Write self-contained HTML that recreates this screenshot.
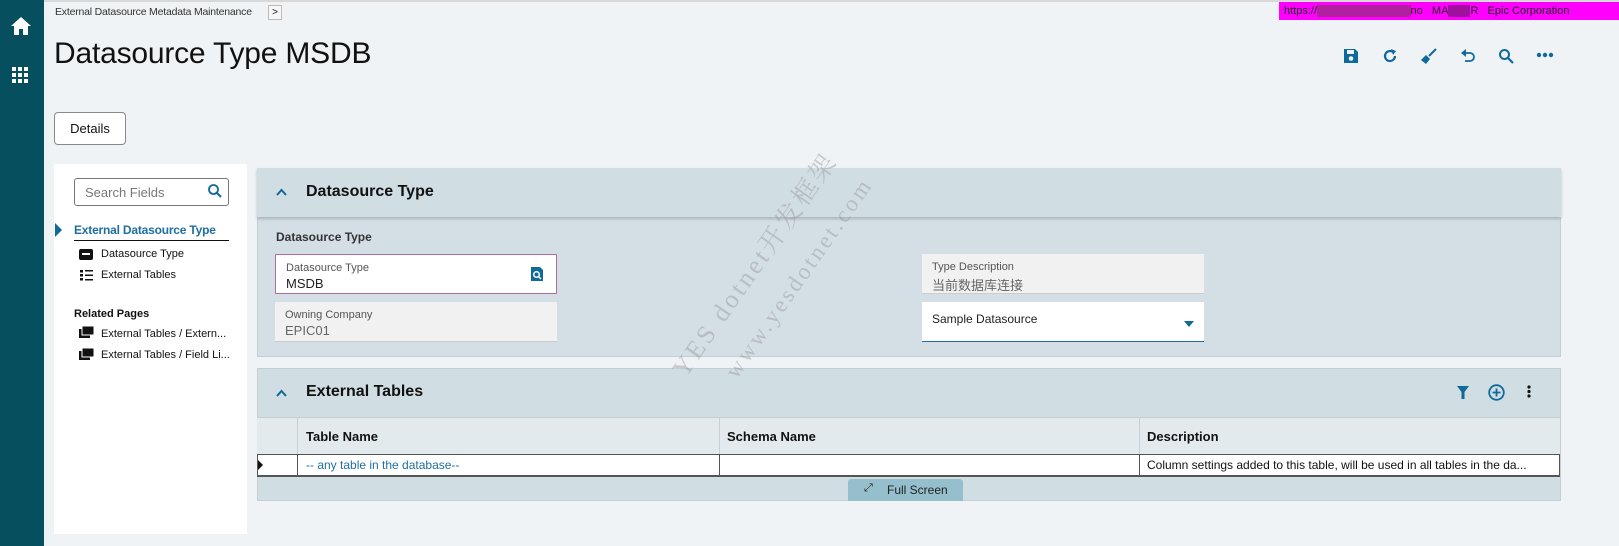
<!DOCTYPE html>
<html><head><meta charset="utf-8"><style>
*{box-sizing:border-box;margin:0;padding:0}
body{width:1619px;height:546px;overflow:hidden;background:#eff3f6;font-family:"Liberation Sans","Noto Sans CJK SC",sans-serif;position:relative;color:#111}
.abs{position:absolute}
.side{left:0;top:0;width:44px;height:546px;background:#064f5f}
.ic{fill:#0f6a9a}
.panel{background:#d3dfe5;border:1px solid #c4cfd5}
.fld{position:absolute;background:#f1f1f1;border-bottom:1px solid #ccc}
.fld .l{position:absolute;left:10px;top:7px;font-size:11px;color:#555}
.fld .v{position:absolute;left:10px;top:21px;font-size:13px;color:#222}
.th{position:absolute;font-size:13px;font-weight:bold;top:12px}
</style></head><body>
<div class="abs" style="left:0;top:0;width:1619px;height:2px;background:#d8d8d8"></div>
<div class="abs side">
<svg class="abs" style="left:10px;top:16px" width="22" height="20" viewBox="0 0 22 20"><path d="M11 1 L1 10 H4 V19 H9 V13 H13 V19 H18 V10 H21 Z" fill="#fff"/></svg>
<svg class="abs" style="left:12px;top:67px" width="18" height="16" viewBox="0 0 18 16"><g fill="#fff"><rect x="0" y="0" width="4" height="4"/><rect x="6" y="0" width="4" height="4"/><rect x="12" y="0" width="4" height="4"/><rect x="0" y="6" width="4" height="4"/><rect x="6" y="6" width="4" height="4"/><rect x="12" y="6" width="4" height="4"/><rect x="0" y="12" width="4" height="4"/><rect x="6" y="12" width="4" height="4"/><rect x="12" y="12" width="4" height="4"/></g></svg>
</div>
<div class="abs" style="left:55px;top:6px;font-size:10.5px;letter-spacing:-0.2px;color:#333">External Datasource Metadata Maintenance</div>
<div class="abs" style="left:268px;top:5px;width:14px;height:15px;border:1px solid #bbb;background:#f7f7f7;font-size:10px;text-align:center;line-height:13px">&gt;</div>
<div class="abs" style="left:1279px;top:2px;width:340px;height:18px;background:#ff00ff;font-size:11px;line-height:18px;padding-left:5px;color:#222">https://<span style="background:#b0209f;color:transparent">xxxxxxxxxxxxxxxxx</span>no &nbsp; MA<span style="background:#a0109f;color:transparent">xxxx</span>R &nbsp; Epic Corporation</div>
<div class="abs" style="left:54px;top:37px;font-size:30px;letter-spacing:-0.2px;color:#111">Datasource Type MSDB</div>
<!-- toolbar -->
<svg class="abs" style="left:1343px;top:48px" width="16" height="16" viewBox="0 0 16 16"><path class="ic" d="M1 1H12L15 4V15H1Z"/><rect x="4" y="2" width="7" height="4" fill="#eff3f6"/><circle cx="8" cy="10.5" r="2.3" fill="#eff3f6"/></svg>
<svg class="abs" style="left:1382px;top:48px" width="16" height="16" viewBox="0 0 16 16"><path d="M13 8A5 5 0 1 1 10.5 3.7" stroke="#0f6a9a" stroke-width="2.2" fill="none"/><path class="ic" d="M9 1L14 3L11 7Z"/></svg>
<svg class="abs" style="left:1420px;top:47px" width="18" height="18" viewBox="0 0 18 18"><path class="ic" d="M6 8L10 12L6 17L1 13Z"/><path d="M9 9L16 2" stroke="#0f6a9a" stroke-width="2"/></svg>
<svg class="abs" style="left:1460px;top:48px" width="16" height="16" viewBox="0 0 16 16"><path d="M4 5H10A4 4 0 0 1 10 13H5" stroke="#0f6a9a" stroke-width="1.8" fill="none"/><path class="ic" d="M1 5L6 1V9Z"/></svg>
<svg class="abs" style="left:1498px;top:48px" width="16" height="16" viewBox="0 0 16 16"><circle cx="6.5" cy="6.5" r="4.5" stroke="#0f6a9a" stroke-width="2" fill="none"/><path d="M10 10L15 15" stroke="#0f6a9a" stroke-width="2.2"/></svg>
<svg class="abs" style="left:1536px;top:52px" width="18" height="6"><circle cx="3" cy="3" r="2.2" fill="#0f6a9a"/><circle cx="9" cy="3" r="2.2" fill="#0f6a9a"/><circle cx="15" cy="3" r="2.2" fill="#0f6a9a"/></svg>
<div class="abs" style="left:54px;top:112px;width:72px;height:33px;border:1px solid #888;border-radius:4px;background:#fff;font-size:13px;text-align:center;line-height:31px">Details</div>
<!-- left nav -->
<div class="abs" style="left:54px;top:164px;width:193px;height:370px;background:#fff"></div>
<div class="abs" style="left:74px;top:178px;width:155px;height:28px;border:1px solid #777;border-radius:3px;font-size:13px;color:#777;padding:6px 10px">Search Fields</div>
<svg class="abs" style="left:207px;top:183px" width="16" height="16" viewBox="0 0 16 16"><circle cx="6.5" cy="6.5" r="4.5" stroke="#0f6a9a" stroke-width="1.8" fill="none"/><path d="M10 10L14 14" stroke="#0f6a9a" stroke-width="2"/></svg>
<svg class="abs" style="left:55px;top:223px" width="8" height="14"><path d="M0 0L7 7L0 14Z" fill="#0f6a9a"/></svg>
<div class="abs" style="left:74px;top:223px;font-size:12px;letter-spacing:-0.2px;font-weight:bold;color:#1e6fa0">External Datasource Type</div>
<div class="abs" style="left:74px;top:240px;width:155px;height:1px;background:#111"></div>
<svg class="abs" style="left:79px;top:249px" width="14" height="11"><rect width="14" height="11" rx="2" fill="#111"/><rect x="3" y="4" width="8" height="2" fill="#fff"/></svg>
<div class="abs" style="left:101px;top:248px;font-size:11px">Datasource Type</div>
<svg class="abs" style="left:80px;top:270px" width="13" height="11"><g fill="#111"><rect y="0" width="3" height="2.5"/><rect y="4" width="3" height="2.5"/><rect y="8" width="3" height="2.5"/><rect x="5" y="0" width="8" height="1.5"/><rect x="5" y="4.5" width="8" height="1.5"/><rect x="5" y="9" width="8" height="1.5"/></g></svg>
<div class="abs" style="left:101px;top:269px;font-size:11px">External Tables</div>
<div class="abs" style="left:74px;top:308px;font-size:11px;font-weight:bold">Related Pages</div>
<svg class="abs" style="left:79px;top:326px" width="15" height="12"><rect x="0" y="3" width="11" height="9" fill="#111"/><rect x="3" y="0" width="12" height="9" fill="#111" stroke="#fff" stroke-width="1"/></svg>
<div class="abs" style="left:101px;top:328px;font-size:11px">External Tables / Extern...</div>
<svg class="abs" style="left:79px;top:348px" width="15" height="12"><rect x="0" y="3" width="11" height="9" fill="#111"/><rect x="3" y="0" width="12" height="9" fill="#111" stroke="#fff" stroke-width="1"/></svg>
<div class="abs" style="left:101px;top:349px;font-size:11px">External Tables / Field Li...</div>
<!-- panel 1 -->
<div class="abs panel" style="left:257px;top:168px;width:1304px;height:189px"></div>
<div class="abs" style="left:257px;top:168px;width:1304px;height:49px;background:#d0dde3;box-shadow:0 2px 3px rgba(0,0,0,.2)"></div>
<svg class="abs" style="left:276px;top:188px" width="11" height="8"><path d="M1 7L5.5 2L10 7" stroke="#0f6a9a" stroke-width="2" fill="none"/></svg>
<div class="abs" style="left:306px;top:183px;font-size:16px;font-weight:bold">Datasource Type</div>
<div class="abs" style="left:276px;top:230px;font-size:12px;font-weight:bold;color:#333">Datasource Type</div>
<div class="fld" style="left:275px;top:254px;width:282px;height:40px;background:#fff;border:1px solid #b0709a"><span class="l">Datasource Type</span><span class="v">MSDB</span></div>
<svg class="abs" style="left:531px;top:267px" width="12" height="14"><path d="M0 0H9L12 3V14H0Z" fill="#0f6a9a"/><circle cx="5.5" cy="7.5" r="2.8" stroke="#fff" stroke-width="1.5" fill="none"/><path d="M7.5 9.5L10 12" stroke="#fff" stroke-width="1.5"/></svg>
<div class="fld" style="left:275px;top:302px;width:282px;height:40px"><span class="l">Owning Company</span><span class="v" style="color:#666">EPIC01</span></div>
<div class="fld" style="left:922px;top:254px;width:282px;height:40px"><span class="l">Type Description</span><span class="v" style="color:#666">当前数据库连接</span></div>
<div class="fld" style="left:922px;top:302px;width:282px;height:40px;background:#fff;border-bottom:1px solid #1e6fa0"><span class="v" style="top:10px;font-size:12px">Sample Datasource</span></div>
<svg class="abs" style="left:1184px;top:321px" width="10" height="6"><path d="M0 0H10L5 6Z" fill="#0f6a9a"/></svg>
<!-- panel 2 -->
<div class="abs panel" style="left:257px;top:368px;width:1304px;height:133px;background:#d0dde3"></div>
<svg class="abs" style="left:276px;top:389px" width="11" height="8"><path d="M1 7L5.5 2L10 7" stroke="#0f6a9a" stroke-width="2" fill="none"/></svg>
<div class="abs" style="left:306px;top:383px;font-size:16px;font-weight:bold">External Tables</div>
<svg class="abs" style="left:1457px;top:386px" width="12" height="13"><path d="M0 0H12L7.5 6V13H4.5V6Z" fill="#0f6a9a"/></svg>
<svg class="abs" style="left:1488px;top:384px" width="17" height="17"><circle cx="8.5" cy="8.5" r="7.3" stroke="#0f6a9a" stroke-width="1.8" fill="none"/><path d="M8.5 4.5V12.5M4.5 8.5H12.5" stroke="#0f6a9a" stroke-width="1.8"/></svg>
<svg class="abs" style="left:1527px;top:385px" width="4" height="13"><circle cx="2" cy="2" r="1.6" fill="#111"/><circle cx="2" cy="6.5" r="1.6" fill="#111"/><circle cx="2" cy="11" r="1.6" fill="#111"/></svg>
<div class="abs" style="left:257px;top:417px;width:1303px;height:37px;background:#e3eaee;border-top:1px solid #c4cfd5"></div>
<div class="abs" style="left:297px;top:417px;width:1px;height:60px;background:#c8d0d5"></div>
<div class="abs" style="left:719px;top:417px;width:1px;height:60px;background:#c8d0d5"></div>
<div class="abs" style="left:1139px;top:417px;width:1px;height:60px;background:#c8d0d5"></div>
<div class="th" style="left:306px;top:429px">Table Name</div>
<div class="th" style="left:727px;top:429px">Schema Name</div>
<div class="th" style="left:1147px;top:429px">Description</div>
<div class="abs" style="left:257px;top:454px;width:1303px;height:23px;background:#fff;border:1px solid #555;border-bottom:2px solid #555"></div>
<div class="abs" style="left:297px;top:455px;width:1px;height:21px;background:#555"></div>
<div class="abs" style="left:719px;top:455px;width:1px;height:21px;background:#555"></div>
<div class="abs" style="left:1139px;top:455px;width:1px;height:21px;background:#555"></div>
<svg class="abs" style="left:258px;top:460px" width="5" height="10"><path d="M0 0L5 5L0 10Z" fill="#111"/></svg>
<div class="abs" style="left:306px;top:458px;font-size:12px;color:#1e6fa0">-- any table in the database--</div>
<div class="abs" style="left:1147px;top:458px;font-size:12px">Column settings added to this table, will be used in all tables in the da...</div>
<div class="abs" style="left:848px;top:479px;width:115px;height:22px;background:#95bfcc;border-radius:3px 3px 0 0;font-size:12px;line-height:22px;padding-left:39px;color:#222">Full Screen</div>
<div class="abs" style="left:864px;top:482px;font-size:11px;color:#222">⤢</div>
<!-- watermark -->
<div class="abs" style="left:620px;top:245px;transform:rotate(-55deg);font-family:'Liberation Serif','Noto Serif CJK SC',serif;font-size:26px;color:rgba(150,150,150,.45);white-space:nowrap;letter-spacing:3px">YES dotnet开发框架</div>
<div class="abs" style="left:680px;top:265px;transform:rotate(-55deg);font-family:'Liberation Serif',serif;font-size:23px;color:rgba(150,150,150,.45);white-space:nowrap;letter-spacing:3px">www.yesdotnet.com</div>
</body></html>
